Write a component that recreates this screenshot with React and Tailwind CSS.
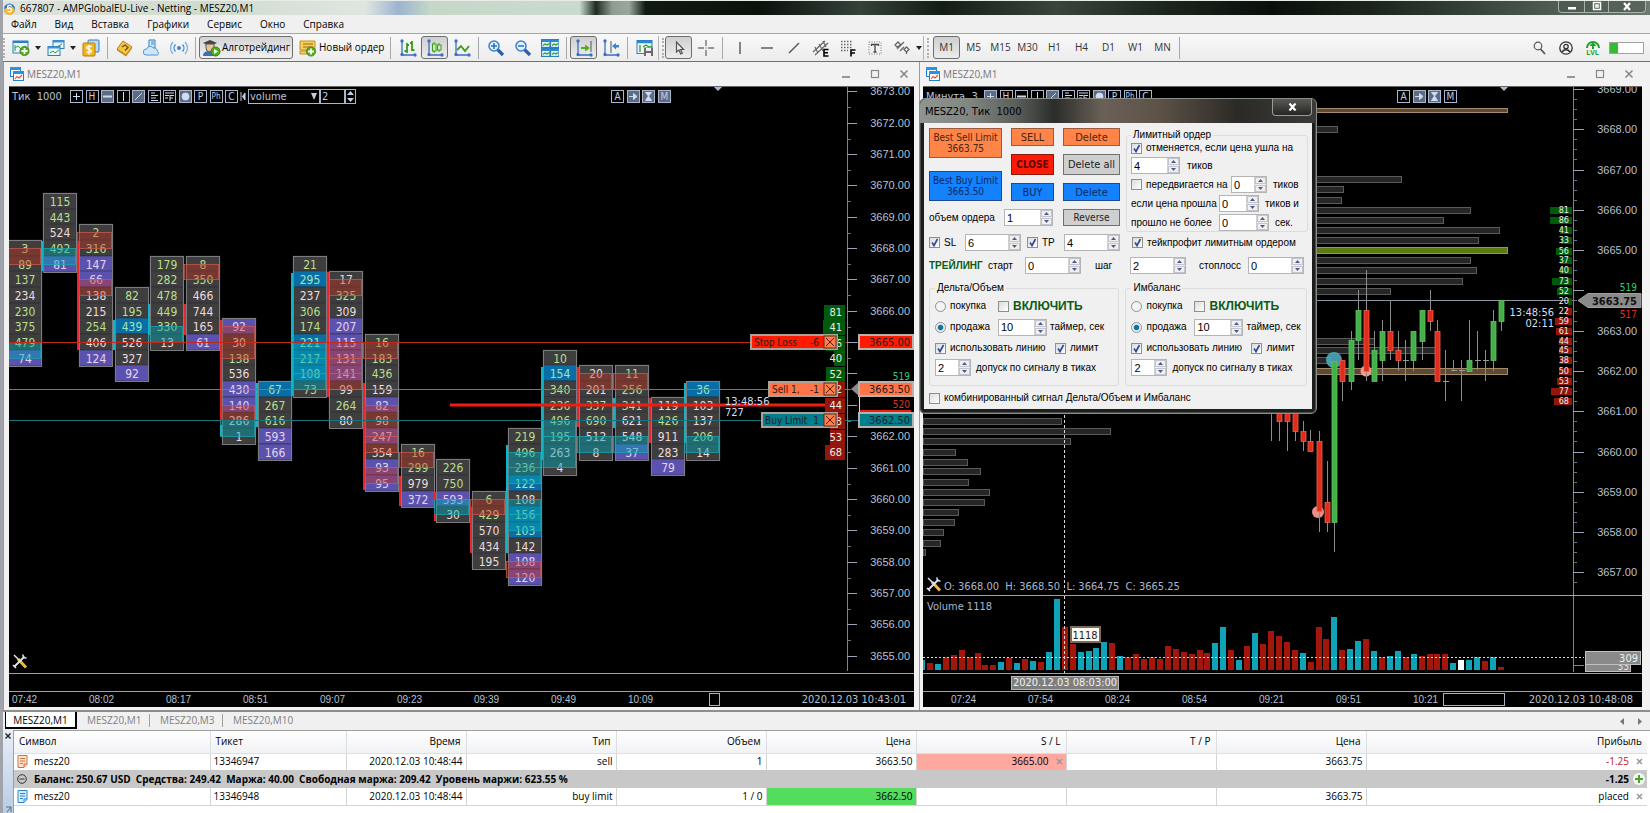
import React from "react";

/* ---------- shared pieces ---------- */

const tahoma = "font-['DejaVu_Sans_Condensed','DejaVu_Sans',sans-serif]";
const arial = "font-['Liberation_Sans',sans-serif]";
const segoe = "font-['Open_Sans',sans-serif]";

function Sep() {
  return <span className="mx-[3px] h-[22px] w-px shrink-0 bg-[#a8a8a8]" />;
}

function Grip() {
  return (
    <span className="flex h-[24px] w-[7px] shrink-0 items-center border-l border-[#b4b4b4] pl-[3px]">
      <span className="h-[20px] border-l-2 border-dotted border-[#b0b0b0]" />
    </span>
  );
}

function Tool({ label, active, children }) {
  return (
    <button
      type="button"
      aria-label={label}
      className={
        "flex h-[23px] w-[27px] shrink-0 items-center justify-center " +
        (active ? "rounded-[3px] border border-[#6e6e6e] bg-linear-to-b from-[#cfcfcf] to-[#ececec]" : "")
      }
    >
      <svg width="18" height="18" viewBox="0 0 18 18" fill="none">
        {children}
      </svg>
    </button>
  );
}

function Caret() {
  return (
    <button type="button" aria-label="Открыть список" className="flex h-[23px] w-[8px] shrink-0 items-center justify-center">
      <svg width="6" height="4" viewBox="0 0 6 4"><path d="M0 0h6L3 4z" fill="#222" /></svg>
    </button>
  );
}

function PlusBadge({ x, y }) {
  return (
    <g>
      <circle cx={x} cy={y} r="4.6" fill="#55a91c" stroke="#3d8410" strokeWidth="0.8" />
      <path d={`M${x - 3} ${y}h6M${x} ${y - 3}v6`} stroke="#fff" strokeWidth="1.8" />
    </g>
  );
}

function Axes() {
  return (
    <g stroke="#3a6fc4" strokeWidth="1.3">
      <path d="M3 1v15h14" />
      <circle cx="3" cy="2" r="1" fill="#3a6fc4" />
      <circle cx="3" cy="15.500" r="1" fill="#3a6fc4" />
      <circle cx="16" cy="16" r="1" fill="#3a6fc4" />
    </g>
  );
}

function ChartBadge() {
  return (
    <svg width="14" height="14" viewBox="0 0 14 14" className="shrink-0">
      <rect x="0.500" y="0.500" width="10" height="9" fill="#fff" stroke="#1f7fd0" />
      <rect x="0" y="0" width="11" height="3" fill="#2a92e6" />
      <rect x="3.500" y="4.500" width="10" height="9" fill="#fff" stroke="#1f7fd0" />
      <rect x="3" y="4" width="11" height="3" fill="#2a92e6" />
      <path d="M5 12l2-2.500 2 1.500 3-3" stroke="#e0562b" strokeWidth="1.200" fill="none" />
    </svg>
  );
}

/* ---------- title bar, menu, toolbar ---------- */

function TitleBar() {
  return (
    <header className="flex h-[15px] shrink-0 items-center border-t border-[#e8ece8] bg-[linear-gradient(90deg,#dfe3dd_0%,#cfdccd_12%,#dfe6e0_22%,#9db4d0_24%,#c5d8c8_26%,#cadbcd_35%,#1d2b20_36%,#8f9d91_37%,#9aa89c_38%,#101a12_39%,#0a120c_46%,#34423a_52%,#131d15_57%,#39453c_64%,#1d2820_70%,#0a0f0b_77%,#1a241c_83%,#39473c_90%,#6d7a70_100%)]">
      <svg width="13" height="13" viewBox="0 0 13 13" className="shrink-0">
        <circle cx="6.500" cy="7" r="5.500" fill="#2f74c8" />
        <path d="M1 7a5.500 5.500 0 0 0 11 1L9 4z" fill="#f0b93a" />
        <path d="M8.500 3.500H5L4.600 6.500c3-1 4.400.500 3.900 2-.500 1.500-2.700 1.600-4 .600" fill="none" stroke="#fff" strokeWidth="1.300" />
      </svg>
      <h1 className={"ml-[4px] text-[10px] leading-[13px] whitespace-nowrap text-black " + segoe}>
        667807 - AMPGlobalEU-Live - Netting - MESZ20,M1
      </h1>
      <div className="mr-[4px] ml-auto flex h-[12px] self-start overflow-hidden rounded-b-[4px] border border-t-0 border-[#a8b2aa] bg-[#4c594f]/60">
        {[
          ["Свернуть", "w-[26px]", <path key="a" d="M4 6h8v2.500H4z" fill="#fff" />],
          ["Восстановить", "w-[24px]", <path key="b" d="M4.500 1.500h7v7h-7zM7 4h2v2H7z" fill="none" stroke="#fff" strokeWidth="1.500" />],
          ["Закрыть", "w-[36px]", <path key="c" d="M5 2l6 7M11 2L5 9" stroke="#fff" strokeWidth="2.200" />],
        ].map(([n, w, d]) => (
          <button key={n} type="button" aria-label={n} className={"flex items-center justify-center border-r border-[#a8b2aa] last:border-r-0 " + w}>
            <svg width="16" height="11" viewBox="0 0 16 11">{d}</svg>
          </button>
        ))}
      </div>
    </header>
  );
}

function MenuBar() {
  return (
    <nav className={"flex h-[18px] shrink-0 items-center gap-[18px] bg-[#f0f0f0] pl-[8px] text-[10px] leading-[16px] text-black " + segoe}>
      {["Файл", "Вид", "Вставка", "Графики", "Сервис", "Окно", "Справка"].map((m) => (
        <button key={m} type="button">{m}</button>
      ))}
    </nav>
  );
}

function Toolbar() {
  return (
    <div className={"flex h-[28px] shrink-0 items-center border-t border-[#a6a6a6] bg-linear-to-b from-[#f8f8f8] to-[#ececec] text-[10px] text-black " + segoe}>
      <span className="mr-[2px] h-[20px] shrink-0 border-l-2 border-dotted border-[#b0b0b0]" />
      <Tool label="Новый график">
        <rect x="1" y="2" width="15" height="12" fill="#eaf5ff" stroke="#2a7fc4" />
        <path d="M1 3h15" stroke="#2a7fc4" strokeWidth="2" />
        <path d="M3 6v6M3 9l3-2 3 3 5-3" stroke="#2e9a3a" />
        <PlusBadge x={12.5} y={12} />
      </Tool>
      <Caret />
      <Tool label="Профили">
        <rect x="6" y="1.500" width="11" height="8" fill="#eaf5ff" stroke="#2a7fc4" />
        <path d="M6 2.500h11" stroke="#3a92de" strokeWidth="2" />
        <rect x="1" y="7.500" width="12" height="9" fill="#eaf5ff" stroke="#2a7fc4" />
        <path d="M1 8.500h12" stroke="#3a92de" strokeWidth="2" />
        <path d="M3 14l3-2 2 2 4-3M10 8l5-3" stroke="#2e9a3a" />
      </Tool>
      <Caret />
      <Tool label="Обзор рынка">
        <rect x="6" y="1" width="11" height="12" rx="1" fill="#b8dcf8" stroke="#2f7fc4" />
        <rect x="1" y="4" width="12" height="13" rx="1" fill="#f3b621" stroke="#b97c08" />
        <path d="M9.500 8c-1-1.200-4.800-1.200-4.800.800s4.800 1.200 4.800 3.200-3.800 2-4.800.600M7 6v9.500" stroke="#fff" strokeWidth="1.400" />
      </Tool>
      <Sep />
      <Tool label="Навигатор">
        <path d="M7 2l9 6-6 8-9-6z" fill="#f3c64a" stroke="#b07f14" />
        <path d="M1 10l9 6v1.500l-9-6zM10 16l6-8v1.500l-6 8z" fill="#c08a1c" />
        <path d="M6 8l3-2 3 2.500-3 3" stroke="#7a5208" strokeWidth="1.400" />
      </Tool>
      <Tool label="Инструменты">
        <path d="M6 1h6v8H6z" fill="#dcefff" stroke="#2f7fc4" />
        <path d="M8 3h3M8 5h3" stroke="#2f7fc4" />
        <path d="M3 16a3 3 0 0 1 .500-6 4 4 0 0 1 7-1 3.500 3.500 0 0 1 4 3.500 2 2 0 0 1 0 3.500z" fill="#cfe6fa" stroke="#4d95d4" />
      </Tool>
      <Tool label="Сигналы">
        <circle cx="9" cy="9" r="2" fill="#3a86d8" />
        <path d="M5.500 5.500a5 5 0 0 0 0 7M12.500 5.500a5 5 0 0 1 0 7" stroke="#3a86d8" strokeWidth="1.300" />
        <path d="M3 3a8.500 8.500 0 0 0 0 12M15 3a8.500 8.500 0 0 1 0 12" stroke="#7db2e8" strokeWidth="1.300" />
      </Tool>
      <Sep />
      <button type="button" className="flex h-[23px] w-[94px] shrink-0 items-center justify-center gap-[1px] rounded-[3px] border border-[#6e6e6e] bg-linear-to-b from-[#d4d4d4] to-[#f0f0f0] whitespace-nowrap">
        <svg width="19" height="18" viewBox="0 0 19 18" fill="none" className="shrink-0">
          <path d="M1 4l7-3 7 3-7 3z" fill="#444" />
          <path d="M4 5h8v4a4 4 0 0 1-8 0z" fill="#e6c39a" stroke="#555" />
          <path d="M1 17c0-4 3-5 7-5s6 1 6 5z" fill="#3f6fae" />
          <circle cx="13.500" cy="12.500" r="4.500" fill="#4fae1d" stroke="#35800e" />
          <path d="M12 10l4 2.500-4 2.500z" fill="#fff" />
        </svg>
        Алготрейдинг
      </button>
      <button type="button" className="flex h-[23px] w-[94px] shrink-0 items-center gap-[2px] pl-[5px] whitespace-nowrap">
        <svg width="19" height="18" viewBox="0 0 19 18" fill="none" className="shrink-0">
          <path d="M2 2h15v9H2z" fill="#f6cf5a" stroke="#c1902a" />
          <path d="M2 12h9v3H2z" fill="#f6cf5a" stroke="#c1902a" />
          <path d="M5 5h10M5 8h10" stroke="#9a6b10" />
          <PlusBadge x={13} y={12.5} />
        </svg>
        Новый ордер
      </button>
      <Sep />
      <Tool label="Бары"><Axes /><path d="M8 4v10M5.500 12H8M8 6h2M13 2v10M11 4h2M13 11h2.500" stroke="#3a9a1e" strokeWidth="1.800" /></Tool>
      <Tool label="Свечи" active><Axes /><path d="M8 3v11M13 4v9" stroke="#3a9a1e" /><rect x="6.500" y="5" width="3.500" height="7" fill="#cdf2bd" stroke="#3a9a1e" /><rect x="11.500" y="6" width="3.500" height="5" fill="#cdf2bd" stroke="#3a9a1e" /></Tool>
      <Tool label="Линия"><Axes /><path d="M4 11l4-4 4 5 4-5" stroke="#3a9a1e" strokeWidth="1.800" /></Tool>
      <Sep />
      <Tool label="Увеличить"><path d="M10 10l6 6" stroke="#2c5fb0" strokeWidth="3.200" /><circle cx="7" cy="7" r="5" fill="#e2f1ff" stroke="#3a7fd0" strokeWidth="1.500" /><path d="M4 7h6M7 4v6" stroke="#2c6fc0" strokeWidth="1.500" /></Tool>
      <Tool label="Уменьшить"><path d="M10 10l6 6" stroke="#2c5fb0" strokeWidth="3.200" /><circle cx="7" cy="7" r="5" fill="#e2f1ff" stroke="#3a7fd0" strokeWidth="1.500" /><path d="M4 7h6" stroke="#2c6fc0" strokeWidth="1.500" /></Tool>
      <Tool label="Плитка">
        {[[1, 1], [10, 1], [1, 10], [10, 10]].map(([x, y]) => (
          <g key={x + "-" + y}>
            <rect x={x - 0.5} y={y - 0.5} width="8.500" height="8" fill="#eaf6ff" stroke="#2a7fc4" strokeWidth="1.300" />
            <path d={`M${x} ${y + 1}h7.500`} stroke="#2a88d8" strokeWidth="2" />
            <path d={`M${x + 1} ${y + 5.5}l2-1.500 2 1 2-1.500`} stroke="#3a9a1e" strokeWidth="1.300" />
          </g>
        ))}
      </Tool>
      <Sep />
      <Tool label="Автопрокрутка" active><Axes /><path d="M16 2v11" stroke="#555" /><path d="M6 8h4V5.500l5 3.500-5 3.500V10H6z" fill="#4bb21d" /></Tool>
      <Tool label="Сдвиг графика"><Axes /><path d="M9 2v12" stroke="#555" /><path d="M17 6h-3V4L10 7l4 3.500V8.500h3z" fill="#3a86d8" /></Tool>
      <Sep />
      <Tool label="Шаблоны">
        <rect x="1" y="1.500" width="15" height="13" fill="#eaf6ff" stroke="#2a7fc4" />
        <path d="M1 3h15" stroke="#2a88d8" strokeWidth="2.500" />
        <path d="M4 6v7M7 8l3-2 3 2 3-1" stroke="#3a9a1e" strokeWidth="1.300" />
        <rect x="8" y="8.500" width="9" height="8.500" fill="#6b6b6b" />
        <path d="M10 9h5v3h-5zM10 14h5v3h-5z" fill="#f0f0f0" />
      </Tool>
      <Grip />
      <Tool label="Курсор" active><path d="M6.500 3v10l2.500-2 1.700 4 1.600-.800-1.700-3.700h3z" fill="#eee" stroke="#555" strokeWidth="1.200" /></Tool>
      <Tool label="Перекрестие"><path d="M9 1v6M9 11v6M1 9h6M11 9h6M8.500 9h1" stroke="#777" strokeWidth="1.400" /></Tool>
      <Sep />
      <Tool label="Вертикальная линия"><path d="M9 3v12" stroke="#555" strokeWidth="1.400" /></Tool>
      <Tool label="Горизонтальная линия"><path d="M3 9h12" stroke="#555" strokeWidth="1.400" /></Tool>
      <Tool label="Трендовая линия"><path d="M4 14L14 4" stroke="#555" strokeWidth="1.400" /></Tool>
      <Tool label="Равноудаленный канал"><path d="M1 13L13 2M3 16L16 4M3 8l3 6M7 5l4 7M11 2l3 6" stroke="#666" strokeWidth="1.200" /><path d="M16.500 10.500H12V17h4.500M12 13.700h4" stroke="#000" strokeWidth="1.600" /></Tool>
      <Tool label="Фибоначчи"><path d="M2 2.500h12M2 5.500h12M2 8.500h12M2 11.500h7" stroke="#666" strokeDasharray="1.500 1.500" strokeWidth="1.300" /><path d="M16.500 11H12v6.500M12 14h4" stroke="#000" strokeWidth="1.600" /></Tool>
      <Tool label="Текст"><rect x="3" y="3" width="12" height="12" stroke="#777" strokeDasharray="1 1.500" /><path d="M5.500 7V5.500h7V7M9 5.500V13M7.500 13h3" stroke="#444" strokeWidth="1.300" /></Tool>
      <Tool label="Объекты"><path d="M2 6l3-3 2.500 2.500-3 3zM4 10l7-7M11 10.500l2.500-2.500 2.500 2.500-2.500 2.500zM13.500 13v2M7 12l4-4" stroke="#666" strokeWidth="1.300" /></Tool>
      <Caret />
      <Grip />
      <div className="ml-[3px] flex">
        {["M1", "M5", "M15", "M30", "H1", "H4", "D1", "W1", "MN"].map((t, i) => (
          <button
            key={t}
            type="button"
            className={
              "flex h-[23px] w-[27px] items-center justify-center text-[#333] " +
              (i === 0 ? "rounded-[3px] border border-[#6e6e6e] bg-linear-to-b from-[#cfcfcf] to-[#ececec]" : "")
            }
          >
            {t}
          </button>
        ))}
      </div>
      <Sep />
      <div className="mr-[6px] ml-auto flex items-center">
        <Tool label="Поиск"><circle cx="8" cy="7" r="3.800" stroke="#555" strokeWidth="1.200" /><path d="M10.500 10l4.500 5" stroke="#555" strokeWidth="1.800" /></Tool>
        <Tool label="Профиль"><circle cx="9" cy="9" r="6.200" stroke="#333" strokeWidth="1.300" /><circle cx="9" cy="7.500" r="2.200" stroke="#333" strokeWidth="1.300" /><path d="M5.500 13c.500-3 6.500-3 7 0" stroke="#333" strokeWidth="1.500" /></Tool>
        <button type="button" aria-label="Уровень" className="flex h-[23px] w-[27px] shrink-0 flex-col items-center justify-center">
          <svg width="18" height="11" viewBox="0 0 18 11" fill="none">
            <path d="M3 10a6 6 0 1 1 12 0" stroke="#1fa32a" strokeWidth="2" />
            <path d="M9 4l3.500 4H10v3H8V8H5.500z" fill="#1fa32a" />
          </svg>
          <span className="text-[7px] leading-[8px] font-bold text-[#1fa32a]">LVL</span>
        </button>
        <span className="ml-[3px] flex h-[12px] w-[35px] border border-[#9aa79a] bg-white">
          <span className="w-[8px] bg-[#33bb33]" />
        </span>
      </div>
    </div>
  );
}

/* ---------- chart windows ---------- */

function ChartWindow({ title, className, children }) {
  return (
    <section className="flex min-h-0 min-w-0 flex-col border-l border-[#9a9a9a] bg-[#f2f2f2]">
      <div className={"flex h-[24px] shrink-0 items-center pl-[6px] text-[#777] " + className}>
        <ChartBadge />
        <h2 className={"ml-[3px] flex-1 text-[10px] " + segoe}>{title}</h2>
        <button type="button" aria-label="Свернуть" className="flex w-[29px] justify-center"><svg width="10" height="10"><path d="M1 8h8" stroke="#777" strokeWidth="1.500" /></svg></button>
        <button type="button" aria-label="Развернуть" className="flex w-[29px] justify-center"><svg width="10" height="10"><rect x="1.500" y="1.500" width="7" height="7" fill="none" stroke="#888" strokeWidth="1.200" /></svg></button>
        <button type="button" aria-label="Закрыть" className="flex w-[29px] justify-center"><svg width="10" height="10"><path d="M1.500 1.500l7 7M8.500 1.500l-7 7" stroke="#888" strokeWidth="1.600" /></svg></button>
      </div>
      {children}
    </section>
  );
}

const glyphs = {
  "+": <path d="M6.500 3v7M3 6.500h7" />,
  "—": <path d="M2 6.500h9" strokeWidth="2" />,
  "|": <path d="M6.500 2v9" />,
  "/": <path d="M3 10l7-7" />,
  "≡": <path d="M3 3h4M3 5.500h7M3 8h5M3 10.500h7" />,
  "F": <path d="M2 3h9M2 5.500h4M7 5.500h4M7 8h3M7 5v6M2 8h3" />,
  "●": <circle cx="6.500" cy="6.500" r="3.500" fill="#cfdcf0" />,
  "→": <path d="M2 6.500h7M6.500 3.500l3.500 3-3.500 3z" fill="#cfdcf0" />,
  "I": <path d="M3.500 2.500h6L6.500 6l3 4.500h-6L6.500 6z" fill="#cfdcf0" />,
};

function MiniButton({ g, on }) {
  return (
    <button
      type="button"
      aria-label={"Инструмент " + g}
      className={
        "flex h-[13px] w-[13px] shrink-0 items-center justify-center border border-[#a9b6cb] text-[10px] leading-[11px] text-[#c3cfe2] " +
        (on ? "bg-[#5d6c85]" : "bg-black")
      }
    >
      {glyphs[g] ? (
        <svg width="13" height="13" viewBox="0 0 13 13" fill="none" stroke="#cfdcf0" className="shrink-0">{glyphs[g]}</svg>
      ) : (
        <span className={g.length > 1 ? "text-[8px]" : ""}>{g}</span>
      )}
    </button>
  );
}

function DrawTools({ on }) {
  return (
    <div className="flex w-[168px] justify-between">
      {["+", "H", "—", "|", "/", "≡", "F", "●", "P", "Ph", "C"].map((g) => (
        <MiniButton key={g} g={g} on={on.includes(g)} />
      ))}
    </div>
  );
}

function ModeTools({ on, className }) {
  return (
    <div className={"absolute top-[3px] flex w-[60px] justify-between " + tahoma + " " + className}>
      {["A", "→", "I", "M"].map((g) => (
        <MiniButton key={g} g={g} on={on.includes(g)} />
      ))}
    </div>
  );
}

function Wrench({ className }) {
  return (
    <svg width="16" height="16" viewBox="0 0 16 16" className={className}>
      <path d="M6 6l8 8.500" stroke="#f0b93c" strokeWidth="3" />
      <path d="M2 2l5 5" stroke="#e6e6e6" strokeWidth="1.400" />
      <path d="M2.500 13.500L12 4" stroke="#e2e6ea" strokeWidth="1.800" />
      <path d="M11 1.500a3 3 0 0 0 3.500 3.500M1 12l3 3" stroke="#e2e6ea" strokeWidth="1.600" fill="none" />
    </svg>
  );
}

/* Footprint clusters: first row index (half-point rows from 3673.00), then
   one token per row. g/w = dark cell, p = purple cell, b = blue cell. */
const clusters = [
  [10, "g3 g89 g137 w234 g230 g375 g479 p74"],
  [7, "g115 g443 w524 g492 p81"],
  [9, "g2 g316 p147 p66 w138 w215 g254 w406 p124"],
  [13, "g82 g195 b439 w526 w327 p92"],
  [11, "g179 g282 g478 g449 g330 w13"],
  [11, "g8 g350 w466 w744 w165 p61"],
  [15, "p92 w30 g138 w536 p430 p140 w286 w1"],
  [19, "b67 g267 g616 p593 p166"],
  [11, "g21 b295 w237 g306 g174 b221 b217 b108 g73"],
  [12, "w17 g325 w309 p207 p115 p131 p141 w99 g264 w80"],
  [16, "g16 g183 g436 w159 p82 w98 p247 w354 p93 p95"],
  [23, "g16 g299 w979 p372"],
  [24, "g226 g750 p593 w30"],
  [26, "g6 g429 w570 w434 w195"],
  [22, "g219 g496 g236 b122 w108 b156 b103 w142 p108 p120"],
  [17, "g10 b154 g340 g236 g496 g195 w263 w4"],
  [18, "w20 w201 g337 g690 w512 w8"],
  [18, "g11 g256 g341 w621 w548 p37"],
  [20, "w119 g426 w911 w283 p79"],
  [19, "b36 w103 w137 g206 w14"],
];

const zones = [
  [0, 10, 11, "r"], [0, 16, 17, "t"], [1, 10, 11, "t"], [2, 9, 10, "r"], [2, 12, 13, "r"],
  [4, 15, 16, "t"], [5, 11, 12, "r"], [6, 15, 17, "r"], [6, 20, 21, "r"], [6, 21, 22, "t"],
  [8, 16, 17, "t"], [8, 17, 18, "t"], [8, 18, 19, "t"], [9, 12, 13, "r"], [9, 16, 17, "r"],
  [9, 17, 18, "r"], [9, 18, 19, "r"], [10, 16, 17, "r"], [10, 20, 22, "r"], [10, 22, 23, "r"],
  [10, 24, 25, "r"], [11, 23, 24, "r"], [12, 26, 27, "t"], [13, 26, 27, "r"], [14, 23, 24, "t"],
  [14, 24, 25, "t"], [14, 26, 27, "t"], [14, 27, 28, "t"], [14, 30, 31, "r"], [15, 21, 22, "t"],
  [15, 22, 24, "t"], [16, 18, 19, "r"], [16, 22, 23, "t"], [17, 18, 19, "r"], [17, 22, 23, "t"],
  [19, 22, 23, "t"],
];

const edges = [
  [1, 241, 271, "c"], [2, 241, 350, "r"], [3, 320, 350, "c"], [4, 304, 335, "c"], [5, 304, 335, "r"],
  [6, 320, 420, "r"], [6, 425, 436, "c"], [7, 383, 427, "c"], [8, 273, 396, "c"], [9, 272, 397, "r"],
  [10, 383, 490, "r"], [11, 476, 506, "r"], [12, 492, 500, "r"], [12, 514, 521, "r"], [13, 507, 553, "r"],
  [14, 445, 553, "c"], [15, 367, 460, "c"], [16, 367, 427, "r"], [17, 398, 428, "c"], [18, 398, 443, "r"],
  [19, 383, 443, "c"],
];

const cellFill = { g: "#3e3e3e", w: "#3e3e3e", p: "#5b52b0", b: "#0a6ea6" };
const cellText = { g: "#b9de8e", w: "#eedada", p: "#e6d4ee", b: "#9fe6bc" };
const rowY = (r) => Math.round(91.3 + 15.67 * r);
const colX = (i) => Math.round(7.6 + 35.72 * i);

function Footprint() {
  return (
    <g>
      {clusters.map(([start, row], i) => {
        const cells = row.split(" ");
        const x = colX(i);
        const top = rowY(start) - 8;
        return (
          <g key={i}>
            {cells.map((c, k) => {
              const y = rowY(start + k);
              return (
                <g key={k}>
                  <rect x={x} y={y - 8} width="34" height="16" fill={cellFill[c[0]]} stroke="#2c2c38" strokeWidth="0.600" />
                  <text x={x + 17} y={y + 5} textAnchor="middle" fontSize="12" fill={cellText[c[0]]}>{c.slice(1)}</text>
                </g>
              );
            })}
            <rect x={x + 0.5} y={top + 0.5} width="33" height={rowY(start + cells.length - 1) + 8 - top} fill="none" stroke="#7c7c80" />
          </g>
        );
      })}
      {zones.map(([i, a, b, c], k) => (
        <rect
          key={k}
          x={colX(i) - 1.5}
          y={rowY(a) + 0.5}
          width="34"
          height={rowY(b) - rowY(a)}
          fill={c === "r" ? "#c8321e" : "#00a5b4"}
          fillOpacity={c === "r" ? 0.4 : 0.45}
          stroke={c === "r" ? "#c4574c" : "#1ba3ae"}
          strokeOpacity="0.800"
        />
      ))}
      {edges.map(([i, a, b, c], k) => (
        <rect key={k} x={colX(i) - 2} y={a} width="2" height={b - a} fill={c === "r" ? "#e8262c" : "#12b4c4"} />
      ))}
    </g>
  );
}

function Ladder({ rows, h, right, size }) {
  return rows.map(([v, y, x, c]) => (
    <g key={v + "-" + y}>
      <rect x={x} y={y - Math.floor(h / 2)} width={right - x} height={h} fill={c === "g" ? "#005a0c" : "#93150c"} />
      <text x={right - 3} y={y + Math.round(size * 0.36)} textAnchor="end" fontSize={size} fill="#e8f0e4">{v}</text>
    </g>
  ));
}

function OrderTag({ x, y, w, fill, name, qty }) {
  return (
    <g>
      <rect x={x + 1} y={y - 7} width={w - 2} height="14" fill={fill} stroke="#aba19b" strokeWidth="2" />
      <text x={x + 4} y={y + 4} fontSize="10" fill="#22201e">{name}</text>
      <text x={x + w - 19} y={y + 4} textAnchor="end" fontSize="10" fill="#22201e">{qty}</text>
      <rect x={x + w - 14} y={y - 6} width="12" height="12" fill="#ff7f4a" stroke="#5a2a18" />
      <path d={`M${x + w - 12} ${y - 4}l8 8m0-8l-8 8`} stroke="#5a1c10" />
    </g>
  );
}

function AxisBox({ y, fill, text }) {
  return (
    <g>
      <rect x="859" y={y - 7} width="54" height="14" fill={fill} stroke="#b9b1ab" strokeWidth="2" />
      <text x="910" y={y + 4} textAnchor="end" fontSize="11" fill="#20201e">{text}</text>
    </g>
  );
}

const axisFont = "'Liberation Sans',sans-serif";

function LeftPlot() {
  const prices = Array.from({ length: 19 }, (_, k) => 3673 - k);
  const boxed = [3665, 3664, 3663];
  return (
    <svg width="100%" height="100%" className={"absolute inset-0 overflow-hidden " + tahoma}>
      <g transform="translate(-9 -87)"><Footprint /></g>
      <svg x="100%" overflow="visible">
        <g transform="translate(-914 -87)">
          <path d="M-900 342.500H750" stroke="#c02a18" />
          <path d="M-900 389.500H768" stroke="#bf5f40" />
          <path d="M-900 420.500H761" stroke="#1a747e" />
          <path d="M838 342.500h20" stroke="#c02a18" />
          <path d="M838 389.500h10" stroke="#bf5f40" />
          <path d="M838 420.500h20" stroke="#1a747e" />
          <path d="M714 87h8l-4 4z" fill="#a9bcd8" />
          <path d="M847.500 87v584" stroke="#7a8496" />
          {prices.map((p, k) => {
            const y = Math.round(91.3 + 31.35 * k);
            return (
              <g key={p}>
                <path d={`M847 ${y + 0.5}h10`} stroke="#9aa4b6" />
                {k < 18 && <path d={`M847 ${y + 16.5}h4`} stroke="#6a7486" />}
                {!boxed.includes(p) && (
                  <text x="910" y={y + 4} textAnchor="end" fontSize="11" fontFamily={axisFont} fill="#b6c0d0">{p}.00</text>
                )}
              </g>
            );
          })}
          <Ladder h={15} right={845} size={11} rows={[
            [81, 312, 824, "g"], [41, 327, 823, "g"], [56, 343, 826, "g"], [40, 358, 834, "g"], [52, 374, 826, "g"],
            [22, 389, 826, "r"], [44, 405, 825, "r"], [23, 421, 830, "r"], [53, 437, 830, "r"], [68, 452, 825, "r"],
          ]} />
          <path d="M450 405H825" stroke="#f01c0c" strokeWidth="3" />
          <g fontSize="11" fill="#d2dff4">
            <text x="725" y="405">13:48:56</text>
            <text x="725" y="416">727</text>
          </g>
          <OrderTag x={750} y={342} w={88} fill="#ff1a00" name="Stop Loss" qty="-6" />
          <OrderTag x={768} y={389} w={70} fill="#ff7548" name="Sell  1," qty="-1" />
          <OrderTag x={761} y={420} w={77} fill="#007e8c" name="Buy Limit" qty="1" />
          <path d="M859 382l-8 7 8 7z" fill="#8c8c8c" />
          <path d="M859.500 396v16" stroke="#ddd" />
          <path d="M860 411h51" stroke="#f01c0c" strokeWidth="2" />
          <AxisBox y={342} fill="#ff1a00" text="3665.00" />
          <AxisBox y={389} fill="#ff7548" text="3663.50" />
          <AxisBox y={420} fill="#007e8c" text="3662.50" />
          <text x="910" y="380" textAnchor="end" fontSize="10" fill="#2fc878">519</text>
          <text x="910" y="408" textAnchor="end" fontSize="10" fill="#e0301c">520</text>
        </g>
      </svg>
    </svg>
  );
}

function LeftChart() {
  return (
    <ChartWindow title="MESZ20,M1" className="pr-[1px]">
      <div className="mr-[5px] mb-[3px] ml-[5px] flex min-h-0 flex-1 flex-col border-t border-[#666] bg-black">
        <div className="relative min-h-0 flex-1">
          <LeftPlot />
          <div className={"relative flex items-center pt-[2px] pl-[3px] text-[11px] leading-[13px] text-[#b9c5d8] " + tahoma}>
            <span className="w-[58px] whitespace-pre">Тик  1000</span>
            <DrawTools on={["—", "/", "●"]} />
            <svg width="6" height="13" viewBox="0 0 6 13" className="mx-[2px]"><path d="M1 2v9M2.500 6.500L5 3v7z" stroke="#c3cfe2" fill="#c3cfe2" /></svg>
            <span className="relative">
              <select aria-label="Режим" className="block h-[15px] w-[72px] appearance-none border border-[#a9b6cb] bg-black pl-[1px] leading-[13px]" defaultValue="volume">
                <option>volume</option>
              </select>
              <svg width="6" height="7" viewBox="0 0 6 7" className="pointer-events-none absolute top-[4px] right-[3px]"><path d="M0 0h6L3 7z" fill="#c3cfe2" /></svg>
            </span>
            <input aria-label="Масштаб" defaultValue="2" className="h-[15px] w-[25px] border border-[#a9b6cb] bg-black pl-[1px]" />
            <span className="flex h-[15px] w-[11px] flex-col border border-[#a9b6cb]">
              <button type="button" aria-label="Больше" className="flex flex-1 items-center justify-center"><svg width="7" height="4"><path d="M0 4h7L3.500 0z" fill="#c3cfe2" /></svg></button>
              <button type="button" aria-label="Меньше" className="flex flex-1 items-center justify-center"><svg width="7" height="4"><path d="M0 0h7L3.500 4z" fill="#c3cfe2" /></svg></button>
            </span>
          </div>
          <ModeTools on={["→", "I", "M"]} className="right-[243px]" />
          <Wrench className="absolute bottom-[4px] left-[3px]" />
        </div>
        <div className="h-[18px] shrink-0 border-t border-[#9aa4b6]" />
        <div className={"flex h-[16px] shrink-0 items-center border-t border-[#9aa4b6] pl-[3px] text-[10px] leading-[14px] text-[#b6c0d0] " + arial}>
          {["07:42", "08:02", "08:17", "08:51", "09:07", "09:23", "09:39", "09:49", "10:09"].map((t) => (
            <span key={t} className="w-[77px] shrink-0">{t}</span>
          ))}
          <span className="ml-[4px] h-[13px] w-[11px] shrink-0 border border-[#a8b2c2]" />
          <time className={"mr-[8px] ml-auto text-[11px] whitespace-nowrap " + tahoma}>2020.12.03 10:43:01</time>
        </div>
      </div>
    </ChartWindow>
  );
}

/* Horizontal profile: [centre y, right x, kind] */
const profile = [
  [110, 1507, "b"], [129, 1337], [179, 1401], [189, 1343], [200, 1341], [210, 1470], [220, 1443], [230, 1499],
  [240, 1478], [250, 1507, "o"], [260, 1470], [270, 1476], [281, 1462], [291, 1390], [341, 1374], [350, 1438],
  [360, 1330], [371, 1507, "b"], [421, 1061], [431, 1110], [441, 1070], [452, 955], [462, 967], [471, 980],
  [482, 968], [492, 989], [502, 984], [512, 958], [522, 954], [532, 943], [543, 940], [552, 925],
];

/* Candles: [x, wick top, wick bottom, body top, body bottom, colour]; "d" is a doji */
const candles = [
  [1271, 405, 441, 405, 410, "r"], [1279, 405, 441, 405, 421, "r"], [1287, 405, 451, 405, 421, "r"], [1295, 405, 441, 405, 431, "r"],
  [1303, 421, 451, 431, 441, "r"], [1310, 430, 451, 441, 451, "r"], [1319, 431, 532, 441, 511, "r"], [1327, 461, 532, 502, 522, "r"],
  [1334, 361, 552, 361, 522, "g"], [1342, 360, 401, 360, 381, "r"], [1351, 331, 390, 340, 381, "g"], [1358, 290, 360, 310, 340, "g"],
  [1366, 270, 381, 310, 371, "r"], [1374, 331, 381, 350, 381, "g"], [1382, 320, 381, 331, 360, "g"], [1390, 300, 360, 331, 350, "r"],
  [1398, 331, 371, 350, 360, "r"], [1405, 340, 381, 360, 360, "d"], [1413, 331, 371, 331, 360, "g"], [1422, 310, 360, 310, 341, "g"],
  [1430, 290, 331, 310, 321, "r"], [1437, 320, 381, 331, 381, "r"], [1445, 350, 401, 381, 381, "d"], [1453, 360, 371, 370, 370, "d"],
  [1461, 360, 401, 370, 370, "d"], [1469, 320, 371, 360, 371, "g"], [1477, 331, 370, 360, 360, "d"], [1485, 350, 381, 360, 360, "d"],
  [1493, 310, 371, 321, 360, "g"], [1501, 300, 331, 300, 321, "g"],
];

function RightPlot() {
  const tone = { b: ["#5b4a38", "#a58a68"], o: ["#5c7a12", "#86a52c"], n: ["#262626", "#5a5a5a"] };
  return (
    <svg width="100%" height="100%" className={"absolute inset-0 overflow-hidden " + tahoma}>
      <g transform="translate(-923 -87)">
        {profile.map(([y, x, kind]) => {
          const [f, s] = tone[kind || "n"];
          const half = y === 110 ? 2 : 3;
          return <rect key={y} x="923.500" y={y - half + 0.5} width={x - 923} height={half * 2} fill={f} stroke={s} />;
        })}
        <path d="M1316 300.500H1577" stroke="#8c96a6" />
        <circle cx="1334" cy="360" r="8" fill="#4fb2c6" fillOpacity="0.850" />
        <circle cx="1366" cy="371" r="5.500" fill="#f09a90" />
        <circle cx="1318" cy="512" r="6" fill="#e88f88" />
        {candles.map(([x, wt, wb, bt, bb, c]) => (
          <g key={x}>
            <path d={`M${x + 0.5} ${wt}V${wb}`} stroke="#8c8c8c" />
            {c === "d" ? (
              <path d={`M${x - 2} ${bt + 0.5}h6`} stroke="#9a9a9a" />
            ) : (
              <rect x={x - 2} y={bt + 0.5} width="5" height={bb - bt} fill={c === "g" ? "#45b04a" : "#e02d1b"} stroke={c === "g" ? "#5cc460" : "#f0604e"} strokeWidth="0.800" />
            )}
          </g>
        ))}
        <path d="M1064.500 90V600" stroke="#d8d8d8" strokeDasharray="3 2" />
      </g>
      <svg x="100%" overflow="visible">
        <g transform="translate(-1642 -87)">
          <path d="M1500 87h8l-4 4z" fill="#a9bcd8" />
          <path d="M1573.500 87v520" stroke="#7a8496" />
          {Array.from({ length: 50 }, (_, k) => {
            const y = Math.round(89 + 10.07 * k);
            const major = k % 4 === 0;
            const p = 3669 - k / 4;
            return (
              <g key={k}>
                <path d={`M1573 ${y + 0.5}h${major ? 11 : 4}`} stroke={major ? "#9aa4b6" : "#6a7486"} />
                {major && p !== 3664 && (
                  <text x="1637" y={y + 4} textAnchor="end" fontSize="11" fontFamily={axisFont} fill="#b6c0d0">{p}.00</text>
                )}
              </g>
            );
          })}
          <Ladder h={7} right={1572} size={9} rows={[
            [81, 210, 1550, "g"], [86, 220, 1550, "g"], [41, 230, 1560, "g"], [33, 240, 1561, "g"], [56, 251, 1556, "g"],
            [37, 260, 1560, "g"], [40, 270, 1560, "g"], [73, 281, 1552, "g"], [52, 291, 1557, "g"], [20, 301, 1568, "g"],
            [22, 311, 1566, "r"], [59, 321, 1555, "r"], [61, 331, 1556, "r"], [44, 341, 1559, "r"], [45, 350, 1559, "r"],
            [38, 360, 1560, "r"], [50, 371, 1559, "r"], [53, 381, 1557, "r"], [77, 391, 1551, "r"], [68, 401, 1554, "r"],
          ]} />
          <path d="M1578 300.500l10-7h53v14h-53z" fill="#8a8a8a" stroke="#a0a0a0" />
          <text x="1637" y="305" textAnchor="end" fontSize="11" fontWeight="bold" fill="#111">3663.75</text>
          <text x="1637" y="291" textAnchor="end" fontSize="10" fill="#2fc878">519</text>
          <text x="1637" y="318" textAnchor="end" fontSize="10" fill="#e0301c">517</text>
          <g fontSize="11" fill="#d2dff4" textAnchor="end">
            <text x="1554" y="316">13:48:56</text>
            <text x="1554" y="327">02:11</text>
          </g>
        </g>
      </svg>
    </svg>
  );
}

const volHeights = [10, 7, 6, 13, 15, 20, 13, 17, 5, 5, 8, 12, 7, 11, 9, 8, 18, 71, 43, 26, 18, 19, 22, 28, 27, 14, 13, 16, 11, 13, 11, 24, 21, 18, 16, 20, 17, 27, 43, 20, 10, 24, 37, 26, 39, 34, 28, 20, 17, 8, 43, 31, 53, 20, 21, 29, 31, 19, 13, 14, 19, 13, 16, 14, 16, 16, 16, 7, 10, 10, 13, 9, 13, 3];
const volColors = "crcrrrrrrrcrcrcrccrrccccrcrrrrrrrrrrrccrcrcrrrrrcrrrcrccrcrccrcrrrrcwccrcr";

function VolumePane() {
  const fill = { c: "#10a2b6", r: "#a2160c", w: "#ffffff" };
  return (
    <svg width="100%" height="100%" className={"absolute inset-0 overflow-hidden " + tahoma}>
      <g transform="translate(-923 -595)">
        {volHeights.map((h, i) => (
          <rect key={i} x={Math.round(922 + 7.93 * i) - 3} y={669 - h} width="6" height={h} fill={fill[volColors[i]]} />
        ))}
        <path d="M923 656.500H1584" stroke="#d8d8d8" strokeDasharray="2 2" />
        <path d="M1064.500 595V672" stroke="#d8d8d8" strokeDasharray="3 2" />
        <text x="927" y="609" fontSize="11" fill="#aab7ca">Volume 1118</text>
        <rect x="1071" y="626" width="29" height="15" fill="#fffaf0" stroke="#7a6a5a" strokeWidth="2" />
        <text x="1085" y="638" textAnchor="middle" fontSize="11" fill="#222">1118</text>
      </g>
      <svg x="100%" overflow="visible">
        <g transform="translate(-1642 -595)">
          <path d="M1573.500 595v76M1573 664.500h11" stroke="#7a8496" />
          <rect x="1585.500" y="657.500" width="45" height="13" fill="#8a8a8a" stroke="#c0c0c0" />
          <text x="1629" y="669" textAnchor="end" fontSize="10" fill="#e6e6e6">33</text>
          <rect x="1585.500" y="650.500" width="55" height="13" fill="#8a8a8a" stroke="#c0c0c0" />
          <text x="1638" y="661" textAnchor="end" fontSize="11" fill="#f0f0f0">309</text>
        </g>
      </svg>
    </svg>
  );
}

function RightChart() {
  return (
    <ChartWindow title="MESZ20,M1" className="pr-[7px]">
      <div className="mr-[8px] mb-[3px] ml-[3px] flex min-h-0 flex-1 flex-col border-t border-[#666] bg-black">
        <div className="relative min-h-0 flex-1">
          <RightPlot />
          <div className={"relative flex items-center pt-[3px] pl-[3px] text-[11px] leading-[13px] text-[#b9c5d8] " + tahoma}>
            <span className="w-[58px] whitespace-pre">Минута  3</span>
            <DrawTools on={["+", "/", "●"]} />
          </div>
          <ModeTools on={["→", "I"]} className="right-[185px]" />
          <Wrench className="absolute bottom-[3px] left-[3px]" />
          <p className={"absolute bottom-[1px] left-[21px] text-[11px] leading-[14px] whitespace-pre text-[#aab7ca] " + tahoma}>
            {"O: 3668.00  H: 3668.50  L: 3664.75  C: 3665.25"}
          </p>
        </div>
        <div className="relative h-[78px] shrink-0 border-t border-[#9aa4b6]">
          <VolumePane />
        </div>
        <div className="h-[18px] shrink-0 border-t border-[#9aa4b6] pt-[2px] pl-[88px]">
          <time className={"block w-[108px] border border-[#b8b8b8] bg-[#7e7e7e] text-center text-[11px] leading-[12px] whitespace-nowrap text-[#f0f0f0] " + tahoma}>
            2020.12.03 08:03:00
          </time>
        </div>
        <div className={"flex h-[16px] shrink-0 items-center border-t border-[#9aa4b6] pl-[2px] text-[10px] leading-[14px] text-[#b6c0d0] " + arial}>
          {["07:24", "07:54", "08:24", "08:54", "09:21", "09:51", "10:21"].map((t) => (
            <span key={t} className="w-[77px] shrink-0 text-center">{t}</span>
          ))}
          <span className="-ml-[21px] h-[13px] w-[62px] shrink-0 border border-[#a8b2c2]" />
          <time className={"mr-[9px] ml-auto text-[11px] whitespace-nowrap " + tahoma}>2020.12.03 10:48:08</time>
        </div>
      </div>
    </ChartWindow>
  );
}

/* ---------- order dialog ---------- */

function Spin({ label, value, w }) {
  return (
    <span className={"flex h-[17px] shrink-0 border border-[#b4b4b4] bg-white " + w}>
      <input aria-label={label} defaultValue={value} className="min-w-0 flex-1 bg-white pl-[2px] text-[11px] leading-[14px] text-black" />
      <span className="flex w-[12px] flex-col gap-px border-l border-[#d0d0d0] bg-[#f0f0f0]">
        <button type="button" aria-label="Больше" className="flex flex-1 items-center justify-center border border-[#c4c4cc]"><svg width="5" height="3"><path d="M0 3h5L2.500 0z" fill="#4a5a90" /></svg></button>
        <button type="button" aria-label="Меньше" className="flex flex-1 items-center justify-center border border-[#c4c4cc]"><svg width="5" height="3"><path d="M0 0h5L2.500 3z" fill="#4a5a90" /></svg></button>
      </span>
    </span>
  );
}

function Check({ children, on, className = "" }) {
  return (
    <label className={"flex items-center gap-[4px] whitespace-nowrap " + className}>
      <span className="relative h-[11px] w-[11px] shrink-0">
        <input type="checkbox" defaultChecked={on} className="peer block h-[11px] w-[11px] appearance-none border border-[#8e8f8f] bg-linear-to-br from-[#dcdcdc] to-white" />
        <svg viewBox="0 0 11 11" className="pointer-events-none absolute inset-0 hidden peer-checked:block"><path d="M3 5.500L5 8.500 8.500 2" fill="none" stroke="#324c9c" strokeWidth="1.700" /></svg>
      </span>
      {children}
    </label>
  );
}

function Radio({ children, on, name, className = "" }) {
  return (
    <label className={"flex items-center gap-[4px] whitespace-nowrap " + className}>
      <input
        type="radio"
        name={name}
        defaultChecked={on}
        className="h-[11px] w-[11px] shrink-0 appearance-none rounded-full border border-[#8e8f8f] bg-[#f4f4f4] checked:bg-[radial-gradient(circle,#1a6f9c_0_35%,#9fd4ec_45%,#f4f4f4_60%)]"
      />
      {children}
    </label>
  );
}

function SignalGroup({ title, name, className }) {
  return (
    <fieldset className={"rounded-[3px] border border-[#dcdcdc] pb-[8px] pl-[5px] " + className}>
      <legend className="px-[2px] leading-[12px]">{title}</legend>
      <div className="mt-[2px] flex h-[20px] items-center">
        <Radio name={name} className="w-[63px]">покупка</Radio>
        <Check><b className="text-[12px] text-[#0c5c14]">ВКЛЮЧИТЬ</b></Check>
      </div>
      <div className="mt-[1px] flex h-[20px] items-center">
        <Radio name={name} on className="w-[63px]">продажа</Radio>
        <Spin label="таймер, сек" value="10" w="w-[49px]" />
        <span className="ml-[3px] whitespace-nowrap">таймер, сек</span>
      </div>
      <div className="mt-[1px] flex h-[20px] items-center">
        <Check on className="w-[120px]">использовать линию</Check>
        <Check on>лимит</Check>
      </div>
      <div className="flex h-[19px] items-center gap-[5px]">
        <Spin label="допуск по сигналу в тиках" value="2" w="w-[36px]" />
        <span className="whitespace-nowrap">допуск по сигналу в тиках</span>
      </div>
    </fieldset>
  );
}

function OrderDialog() {
  const btn = "flex items-center justify-center border leading-[11px] ";
  const orange = "border-[#9c5a3c] bg-[#ff8448] text-[#4a2410] ";
  const blue = "border-[#1c4a8c] bg-[#1482ff] text-[#0a2860] ";
  const gray = "border-[#707070] bg-[#cfcfcf] text-[#222] ";
  return (
    <div role="dialog" aria-label="MESZ20, Тик 1000" className="absolute top-[98px] left-[916px] w-[398px] rounded-[6px] border border-[#8a8e88] bg-[#1c1e1c] px-[4px] pb-[4px] shadow-[inset_0_0_0_1px_#4a4e4a]">
      <div className="-mx-[4px] flex h-[24px] rounded-t-[6px] bg-[linear-gradient(90deg,#8f948f_0%,#838783_12%,#5c5f5a_24%,#2b2d2a_34%,#6a6058_46%,#5d5348_60%,#2c2a27_80%,#3a3b38_100%)]">
        <h2 className={"flex-1 pt-[6px] pl-[5px] text-[11px] leading-[13px] whitespace-pre text-black " + tahoma}>MESZ20, Тик  1000</h2>
        <button type="button" aria-label="Закрыть" className="mr-[4px] flex h-[17px] w-[40px] items-center justify-center rounded-b-[4px] border border-t-0 border-[#9a9a96] bg-linear-to-b from-[#5a5a56] to-[#262624]">
          <svg width="9" height="8" viewBox="0 0 9 8"><path d="M1.500 0.500l6 7M7.500 0.500l-6 7" stroke="#fff" strokeWidth="2.200" /></svg>
        </button>
      </div>
      <div className="bg-[#f0f0f0] px-[5px] pt-[5px] pb-[2px] font-['Liberation_Sans',sans-serif] text-[10px] leading-[12px] text-black">
        <div className="flex gap-[6px]">
          <div className="w-[191px] shrink-0">
            <div className={"flex items-start justify-between text-[10px] " + tahoma}>
              <div className="flex flex-col gap-[13px]">
                <button type="button" className={btn + orange + "h-[30px] w-[73px]"}>Best Sell Limit<br />3663.75</button>
                <button type="button" className={btn + blue + "h-[30px] w-[73px]"}>Best Buy Limit<br />3663.50</button>
              </div>
              <div className="flex flex-col gap-[8px] text-[11px]">
                <button type="button" className={btn + orange + "h-[18px] w-[43px]"}>SELL</button>
                <button type="button" className={btn + "h-[21px] w-[43px] border-[#8a1a0c] bg-[#ff1a08] text-[10px] font-bold text-[#5a0800]"}>CLOSE</button>
                <button type="button" className={btn + blue + "h-[18px] w-[43px]"}>BUY</button>
              </div>
              <div className="flex flex-col gap-[8px] text-[11px]">
                <button type="button" className={btn + orange + "h-[18px] w-[57px]"}>Delete</button>
                <button type="button" className={btn + gray + "h-[21px] w-[57px] whitespace-nowrap"}>Delete all</button>
                <button type="button" className={btn + blue + "h-[18px] w-[57px]"}>Delete</button>
              </div>
            </div>
            <div className="mt-[8px] flex items-center">
              <span className="w-[75px] whitespace-nowrap">объем ордера</span>
              <Spin label="объем ордера" value="1" w="w-[49px]" />
              <button type="button" className={btn + gray + "ml-auto h-[17px] w-[57px] " + tahoma}>Reverse</button>
            </div>
          </div>
          <fieldset className="mt-[1px] w-[182px] shrink-0 rounded-[3px] border border-[#dcdcdc] pl-[4px]">
            <legend className="px-[2px] leading-[12px]">Лимитный ордер</legend>
            <Check on className="mt-[1px]">отменяется, если цена ушла на</Check>
            <div className="mt-[3px] flex items-center gap-[7px]"><Spin label="Отмена, тиков" value="4" w="w-[49px]" />тиков</div>
            <div className="mt-[2px] flex items-center">
              <Check className="w-[100px]">передвигается на</Check>
              <Spin label="Сдвиг, тиков" value="0" w="w-[36px]" /><span className="ml-[6px]">тиков</span>
            </div>
            <div className="mt-[2px] flex items-center">
              <span className="w-[88px] whitespace-nowrap">если цена прошла</span>
              <Spin label="Прошла, тиков" value="0" w="w-[40px]" /><span className="ml-[6px]">тиков и</span>
            </div>
            <div className="mt-[2px] flex items-center">
              <span className="w-[88px] whitespace-nowrap">прошло не более</span>
              <Spin label="Прошло, сек." value="0" w="w-[50px]" /><span className="ml-[6px]">сек.</span>
            </div>
          </fieldset>
        </div>
        <div className="mt-[2px] flex items-center">
          <Check on className="w-[36px]">SL</Check>
          <Spin label="SL" value="6" w="w-[56px]" />
          <Check on className="ml-[6px] w-[37px]">TP</Check>
          <Spin label="TP" value="4" w="w-[56px]" />
          <Check on className="ml-[12px]">тейкпрофит лимитным ордером</Check>
        </div>
        <div className="mt-[6px] flex items-center">
          <b className="w-[59px] text-[#0c5c14]">ТРЕЙЛИНГ</b>
          <span className="w-[37px]">старт</span>
          <Spin label="старт" value="0" w="w-[56px]" />
          <span className="ml-[14px] w-[35px]">шаг</span>
          <Spin label="шаг" value="2" w="w-[56px]" />
          <span className="ml-[13px] w-[49px]">стоплосс</span>
          <Spin label="стоплосс" value="0" w="w-[56px]" />
        </div>
        <div className="mt-[8px] flex gap-[6px]">
          <SignalGroup title="Дельта/Объем" name="delta" className="w-[191px]" />
          <SignalGroup title="Имбаланс" name="imbalance" className="w-[182px]" />
        </div>
        <Check className="mt-[3px] h-[18px]">комбинированный сигнал Дельта/Объем и Имбаланс</Check>
      </div>
    </div>
  );
}

/* ---------- tabs and terminal ---------- */

function Tabs() {
  return (
    <div className={"flex h-[20px] shrink-0 items-start border-t-2 border-[#8e8e8e] bg-[#f0f0f0] pl-[2px] text-[10px] leading-[16px] text-[#808080] " + segoe}>
      <button type="button" className="h-[17px] w-[72px] border-r-2 border-b-2 border-l border-black bg-white leading-[14px] text-black">MESZ20,M1</button>
      {["MESZ20,M1", "MESZ20,M3", "MESZ20,M10"].map((t, i) => (
        <button key={t} type="button" className={"mt-[2px] h-[13px] w-[73px] border-[#a0a0a0] pl-[10px] text-left leading-[13px] " + (i < 2 ? "border-r" : "")}>{t}</button>
      ))}
      <span className="mr-[8px] ml-auto flex h-full items-center gap-[14px]">
        <button type="button" aria-label="Назад"><svg width="4" height="7"><path d="M4 0v7L0 3.500z" fill="#777" /></svg></button>
        <button type="button" aria-label="Вперед"><svg width="4" height="7"><path d="M0 0v7l4-3.500z" fill="#777" /></svg></button>
      </span>
    </div>
  );
}

function Doc({ c, f }) {
  return (
    <svg width="11" height="13" viewBox="0 0 11 13" className="shrink-0">
      <path d="M1 0.500h9v9L7 12.500H1z" fill={f} stroke={c} />
      <path d="M3 3.500h5M3 6h5M3 8.500h3M7 12v-3h3" stroke={c} fill="none" />
    </svg>
  );
}

function CloseX() {
  return (
    <button type="button" aria-label="Закрыть" className="ml-[7px] inline-block">
      <svg width="7" height="7"><path d="M1 1l5 5M6 1L1 6" stroke="#999" strokeWidth="1.500" /></svg>
    </button>
  );
}

function Terminal() {
  const heads = ["Символ", "Тикет", "Время", "Тип", "Объем", "Цена", "S / L", "T / P", "Цена", "Прибыль"];
  const cell = "border-r border-[#d4d4d4] px-[3px] text-right";
  return (
    <section className="flex h-[83px] shrink-0 bg-[#dce6f2]">
      <div className="flex w-[11px] shrink-0 flex-col justify-between border-r border-[#a0a0a0] bg-linear-to-b from-[#e8eef6] to-[#b8cce4]">
        <button type="button" aria-label="Закрыть панель" className="flex h-[12px] items-center justify-center"><svg width="6" height="6"><path d="M0.500 0.500l5 5M5.500 0.500l-5 5" stroke="#222" strokeWidth="1.400" /></svg></button>
        <svg width="10" height="8" viewBox="0 0 10 8"><path d="M3 2h5v5M4 7l4-5" stroke="#5a6a84" fill="none" /></svg>
      </div>
      <div className="min-w-0 flex-1 border-t border-[#a0a0a0] bg-white pr-[3px]">
        <table className={"w-full table-fixed border-collapse text-[10px] leading-[15px] text-black " + segoe}>
          <colgroup>
            <col className="w-[196px]" /><col className="w-[136px]" /><col className="w-[120px]" /><col className="w-[150px]" /><col className="w-[150px]" />
            <col className="w-[150px]" /><col className="w-[150px]" /><col className="w-[150px]" /><col className="w-[150px]" /><col />
          </colgroup>
          <thead>
            <tr className="h-[22px] bg-linear-to-b from-white to-[#f1f2f4]">
              {heads.map((h, i) => (
                <th key={i} scope="col" className={"border-r border-b border-[#dcdfe4] px-[5px] font-normal last:border-r-0 " + (i < 2 ? "text-left" : "text-right")}>{h}</th>
              ))}
            </tr>
          </thead>
          <tbody>
            <tr className="h-[17px]">
              <td className="border-r border-[#d4d4d4] pl-[3px]"><span className="flex items-center gap-[6px]"><Doc c="#d0703c" f="#ffe3d0" />mesz20</span></td>
              <td className="border-r border-[#d4d4d4] pl-[3px]">13346947</td>
              <td className={cell}>2020.12.03 10:48:44</td>
              <td className={cell}>sell</td>
              <td className={cell}>1</td>
              <td className={cell}>3663.50</td>
              <td className={cell + " bg-[#ffa8a0]"}>3665.00<CloseX /></td>
              <td className={cell}></td>
              <td className={cell}>3663.75</td>
              <td className="pr-[4px] text-right text-[#c02020]">-1.25<CloseX /></td>
            </tr>
            <tr className="h-[18px] bg-[#c8c8c8] font-bold">
              <td colSpan={9} className="pl-[3px]">
                <span className="flex items-center gap-[7px] whitespace-pre">
                  <svg width="10" height="10"><circle cx="5" cy="5" r="4.300" fill="none" stroke="#333" /><path d="M2.500 5h5" stroke="#333" /></svg>
                  {"Баланс: 250.67 USD  Средства: 249.42  Маржа: 40.00  Свободная маржа: 209.42  Уровень маржи: 623.55 %"}
                </span>
              </td>
              <td className="pr-[2px]">
                <span className="flex items-center justify-end gap-[4px]">-1.25
                  <svg width="12" height="12"><circle cx="6" cy="6" r="6" fill="#f4f8f0" /><path d="M6 2v8M2 6h8" stroke="#4aa52a" strokeWidth="2" /></svg>
                </span>
              </td>
            </tr>
            <tr className="h-[17px] border-b border-[#d4d4d4]">
              <td className="border-r border-[#d4d4d4] pl-[3px]"><span className="flex items-center gap-[6px]"><Doc c="#2f86c4" f="#d4ecff" />mesz20</span></td>
              <td className="border-r border-[#d4d4d4] pl-[3px]">13346948</td>
              <td className={cell}>2020.12.03 10:48:44</td>
              <td className={cell}>buy limit</td>
              <td className={cell}>1 / 0</td>
              <td className={cell + " bg-[#54dc5c]"}>3662.50</td>
              <td className={cell}></td>
              <td className={cell}></td>
              <td className={cell}>3663.75</td>
              <td className="pr-[4px] text-right">placed<CloseX /></td>
            </tr>
          </tbody>
        </table>
      </div>
    </section>
  );
}

export default function App() {
  return (
    <div className="relative flex h-screen flex-col overflow-hidden border-l-[3px] border-[#a0a3aa] bg-[#f0f0f0]">
      <TitleBar />
      <MenuBar />
      <Toolbar />
      <main className="grid min-h-0 flex-1 grid-cols-[916fr_731fr] border-t border-[#707070]">
        <LeftChart />
        <RightChart />
      </main>
      <Tabs />
      <Terminal />
      <OrderDialog />
    </div>
  );
}
